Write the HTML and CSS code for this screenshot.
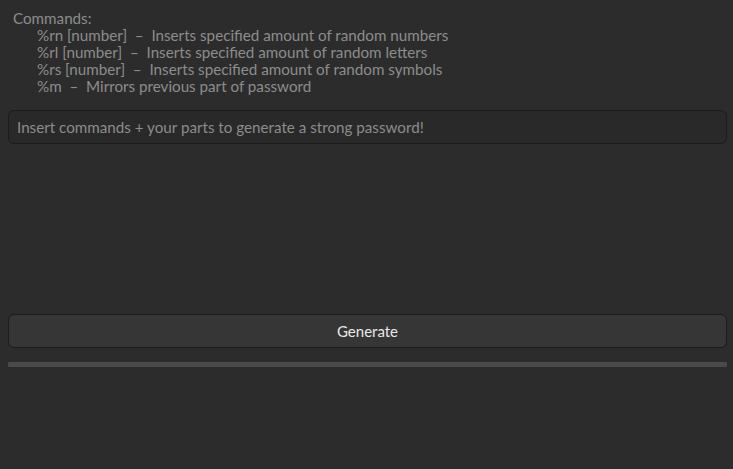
FILE: index.html
```html
<!DOCTYPE html>
<html>
<head>
<meta charset="utf-8">
<link rel="stylesheet" href="styles.css">
</head>
<body>
<div class="app">
  <div class="help">
    <div class="help-title">Commands:</div>
    <div class="help-line">%rn [number]&nbsp; –&nbsp; Inserts specified amount of random numbers</div>
    <div class="help-line">%rl [number]&nbsp; –&nbsp; Inserts specified amount of random letters</div>
    <div class="help-line">%rs [number]&nbsp; –&nbsp; Inserts specified amount of random symbols</div>
    <div class="help-line">%m&nbsp; –&nbsp; Mirrors previous part of password</div>
  </div>
  <div class="entry">Insert commands + your parts to generate a strong password!</div>
  <div class="spacer"></div>
  <button class="btn">Generate</button>
  <div class="progress"></div>
</div>
</body>
</html>
```
FILE: styles.css
```css
html, body {
  margin: 0;
  padding: 0;
  background: #2c2c2c;
  width: 733px;
  height: 469px;
  overflow: hidden;
}
.app {
  display: flex;
  flex-direction: column;
  padding: 10px 6px 0 8px;
  font-family: "Lato", "Noto Sans", sans-serif;
  font-size: 15.2px;
  color: #8c8c8c;
}
.help {
  display: flex;
  flex-direction: column;
  padding-left: 5px;
  line-height: 17px;
}
.help-line {
  padding-left: 24px;
}
.entry {
  margin-top: 15px;
  height: 34px;
  box-sizing: border-box;
  border: 1px solid #1c1c1c;
  border-radius: 6px;
  background: #292929;
  padding: 0 8px;
  display: flex;
  align-items: center;
}
.spacer {
  height: 170px;
}
.btn {
  height: 34px;
  box-sizing: border-box;
  border: 1px solid #1c1c1c;
  border-radius: 6px;
  background: #363636;
  color: #e8e8e8;
  font-family: inherit;
  font-size: 15px;
  padding: 0;
}
.progress {
  margin-top: 14px;
  height: 5px;
  background: #4a4a4a;
  border-radius: 1px;
}
```
